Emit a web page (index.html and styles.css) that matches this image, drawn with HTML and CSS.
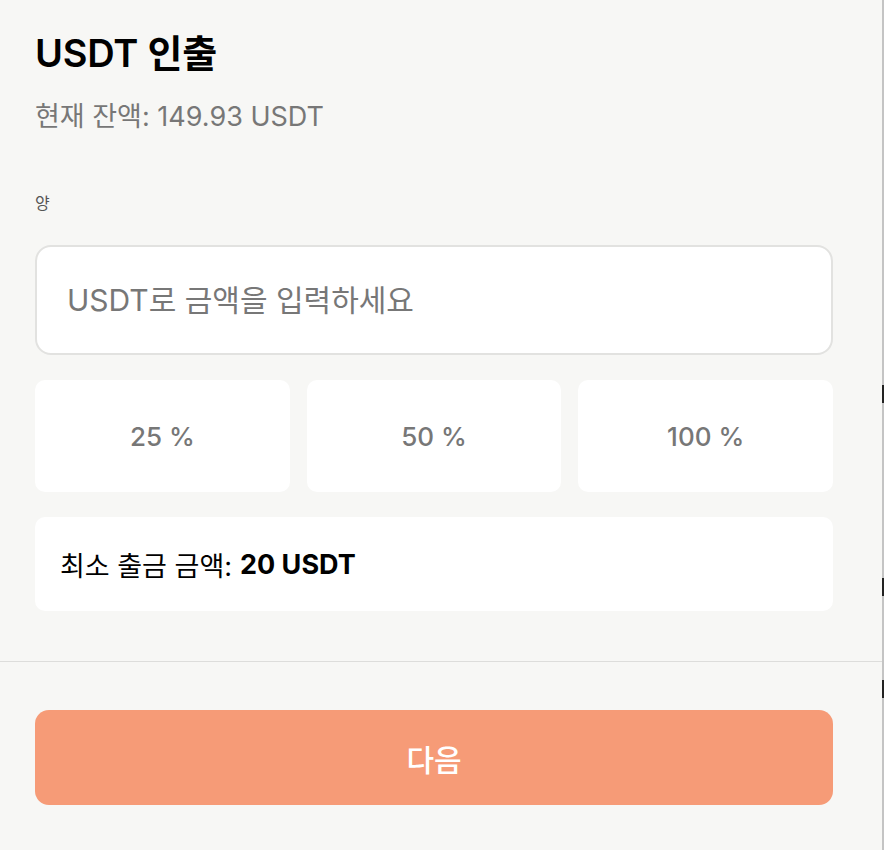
FILE: index.html
```html
<!DOCTYPE html>
<html lang="ko">
<head>
<meta charset="utf-8">
<title>USDT 인출</title>
<link rel="stylesheet" href="styles.css">
</head>
<body>
<div class="page">
  <main class="panel">
    <section class="content">
      <h1 class="title">USDT 인출</h1>
      <p class="balance">현재 잔액: 149.93 USDT</p>
      <label class="label" for="amount">양</label>
      <input class="amount" id="amount" type="text" placeholder="USDT로 금액을 입력하세요">
      <div class="presets">
        <button class="preset" type="button">25 %</button>
        <button class="preset" type="button">50 %</button>
        <button class="preset" type="button">100 %</button>
      </div>
      <div class="info">최소 출금 금액: <strong>20 USDT</strong></div>
    </section>
    <footer class="footer">
      <button class="next" type="button">다음</button>
    </footer>
  </main>
  <div class="edge">
    <span class="mark mark-1"></span>
    <span class="mark mark-2"></span>
    <span class="mark mark-3"></span>
  </div>
</div>
</body>
</html>
```

FILE: styles.css
```css
* { box-sizing: border-box; }

html, body {
  margin: 0;
  padding: 0;
  background: #f7f7f5;
}

body {
  font-family: Inter, "Noto Sans CJK KR", sans-serif;
  color: #000;
}

.page {
  display: flex;
  width: 884px;
  height: 850px;
  overflow: hidden;
}

.panel {
  width: 882px;
  display: flex;
  flex-direction: column;
}

.content {
  padding: 30px 49px 0 35px;
  display: flex;
  flex-direction: column;
}

.title {
  margin: 0;
  font-size: 38px;
  line-height: 46px;
  font-weight: 600;
  letter-spacing: -0.2px;
}

.balance {
  margin: 24px 0 0;
  font-size: 27px;
  line-height: 34px;
  color: #777;
  font-weight: 400;
}

.label {
  margin-top: 58px;
  font-size: 16px;
  line-height: 22px;
  color: #555;
}

.amount {
  margin-top: 31px;
  height: 110px;
  width: 100%;
  border: 2px solid #e2e2e0;
  border-radius: 16px;
  background: #fff;
  padding: 0 30px;
  font-family: inherit;
  font-size: 30px;
  color: #000;
  outline: none;
}

.amount::placeholder {
  color: #777;
}

.presets {
  margin-top: 25px;
  display: grid;
  grid-template-columns: repeat(3, 1fr);
  gap: 17px;
}

.preset {
  height: 112px;
  border: none;
  border-radius: 10px;
  background: #fff;
  font-family: inherit;
  font-size: 26px;
  font-weight: 500;
  color: #777;
  padding: 0;
}

.info {
  margin-top: 25px;
  height: 94px;
  background: #fff;
  border-radius: 10px;
  display: flex;
  align-items: center;
  padding: 0 25px;
  font-size: 27px;
  font-weight: 400;
}

.info strong {
  font-weight: 700;
  margin-left: 8px;
}

.footer {
  margin-top: 50px;
  border-top: 1px solid #dddddb;
  padding: 48px 49px 0 35px;
}

.next {
  width: 100%;
  height: 95px;
  border: none;
  border-radius: 14px;
  background: #f69b77;
  color: #fff;
  font-family: inherit;
  font-size: 30px;
  font-weight: 500;
}

.edge {
  position: relative;
  width: 2px;
  background: #c4c4c4;
}

.mark {
  position: absolute;
  left: 0;
  width: 2px;
  background: #222;
}

.mark-1 { top: 385px; height: 18px; }
.mark-2 { top: 578px; height: 18px; }
.mark-3 { top: 680px; height: 18px; }
```
